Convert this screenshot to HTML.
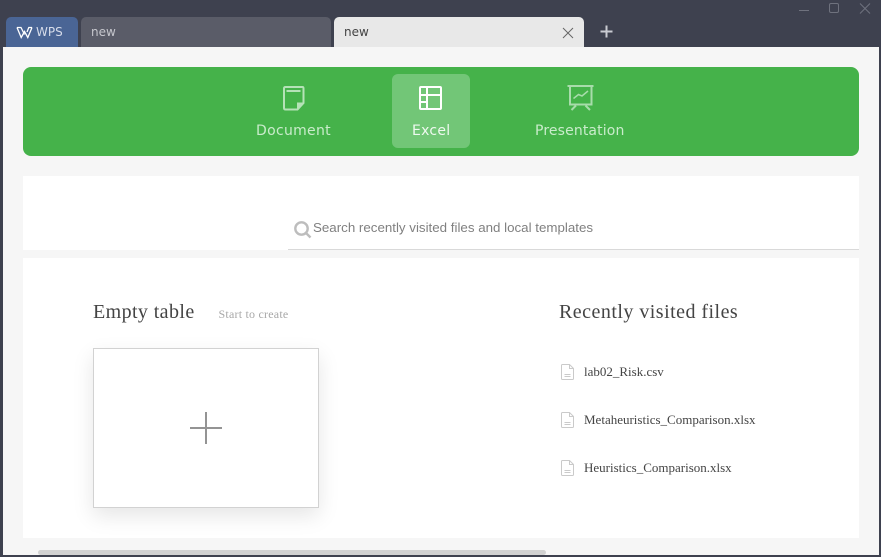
<!DOCTYPE html>
<html><head><meta charset="utf-8">
<style>
html,body{margin:0;padding:0;width:881px;height:557px;overflow:hidden;background:#3e414f}
*{box-sizing:border-box}
.a{position:absolute;white-space:nowrap}
.dj{font-family:"DejaVu Sans",sans-serif}
.ls{font-family:"Liberation Sans",sans-serif}
.lf{font-family:"Liberation Serif",serif}
svg{position:absolute;overflow:visible}
</style></head><body>
<div class="a" style="left:3px;top:47px;width:876px;height:508px;background:#f6f6f6"></div>

<div class="a" style="left:6px;top:17px;width:72px;height:30px;background:#4a6595;border-radius:5px 5px 0 0"></div>
<svg style="left:15.500px;top:26px" width="17" height="13" fill="none" stroke="#fff" stroke-width="1.300"><path d="M1 1.500L5.200 11.500L8.500 5.500L11.800 11.500L16 1.500"/><path d="M1 1.500H5L8.500 8.500"/><path d="M16 1.500H12.800L11 6"/></svg>
<div class="a dj" style="left:36px;top:25px;font-size:12px;line-height:15px;color:#d6dcea">WPS</div>
<div class="a" style="left:81px;top:17px;width:250px;height:30px;background:#5a5c68;border-radius:5px 5px 0 0"></div>
<div class="a dj" style="left:91px;top:25px;font-size:12px;line-height:15px;color:#c6c7cd">new</div>
<div class="a" style="left:334px;top:17px;width:250px;height:30px;background:#e8e8e8;border-radius:5px 5px 0 0"></div>
<div class="a dj" style="left:344px;top:25px;font-size:12px;line-height:15px;color:#444">new</div>
<svg style="left:562px;top:27px" width="12" height="12" stroke="#666" stroke-width="1" fill="none"><path d="M1 1L11 11M11 1L1 11"/></svg>
<svg style="left:600px;top:25px" width="13" height="13" stroke="#c9cbd2" stroke-width="2" fill="none"><path d="M6.500 0.500V12.500M0.500 6.500H12.500"/></svg>
<svg style="left:799px;top:3px" width="75" height="11" fill="none" stroke="#6f727e" stroke-width="1"><path d="M0 7.500H10"/><rect x="30.500" y="0.500" width="9" height="9" rx="1.500"/><path d="M61 0.500L71 10.500M71 0.500L61 10.500"/></svg>

<div class="a" style="left:23px;top:67px;width:836px;height:89px;background:#45b24a;border-radius:8px"></div>
<div class="a" style="left:392px;top:74px;width:78px;height:74px;background:#72c677;border-radius:6px"></div>
<svg style="left:282px;top:86px" width="22" height="25" fill="none" stroke="#b5e2b7" stroke-width="2"><path d="M2 2.500Q2 1 3.500 1H20.500Q21.500 1 21.500 2.500V17L15.500 23.500H3.500Q2 23.500 2 22Z"/><path d="M4.500 5H18.500"/><path d="M22 16.500H15V24Z" fill="#b5e2b7" stroke="none"/></svg>
<svg style="left:419px;top:86px" width="23" height="24" fill="none" stroke="#fff" stroke-width="2"><rect x="1" y="1" width="21" height="22" rx="1"/><path d="M1 9H22M8 1V23M1 16H8"/></svg>
<svg style="left:567px;top:85px" width="27" height="26" fill="none" stroke="#a8dcab" stroke-width="2"><path d="M0.500 1H26.500"/><path d="M3 1V19.500H24.500V1"/><path d="M6.500 13.500L11.500 9.500L15 11L21 6" stroke-width="1.500"/><path d="M9 20.500L4.500 25M18.500 20.500L23 25"/></svg>
<div class="a dj" style="left:256px;top:122px;font-size:14px;line-height:18px;letter-spacing:0.3px;color:#c9eccb">Document</div>
<div class="a dj" style="left:412px;top:122px;font-size:14px;line-height:18px;letter-spacing:0.25px;color:#eef9ef">Excel</div>
<div class="a dj" style="left:535px;top:122px;font-size:14px;line-height:18px;letter-spacing:0.13px;color:#c9eccb">Presentation</div>

<div class="a" style="left:23px;top:176px;width:836px;height:74px;background:#fff"></div>
<div class="a" style="left:288px;top:249px;width:571px;height:1px;background:#d9d9d9"></div>
<svg style="left:294px;top:221px" width="18" height="18" fill="none" stroke="#bdbdbd" stroke-width="2.400"><circle cx="7.500" cy="7.500" r="6.200"/><path d="M12 12L16.500 16.500"/></svg>
<div class="a ls" style="left:313px;top:219px;font-size:13.333px;line-height:17px;color:#808080">Search recently visited files and local templates</div>

<div class="a" style="left:23px;top:258px;width:836px;height:280px;background:#fff"></div>
<div class="a lf" style="left:93px;top:300px;font-size:20px;line-height:24px;letter-spacing:0.4px;color:#444">Empty table</div>
<div class="a lf" style="left:218.500px;top:307px;font-size:12px;line-height:15px;letter-spacing:0.22px;color:#a8a8a8">Start to create</div>
<div class="a" style="left:93px;top:348px;width:226px;height:160px;background:#fff;border:1px solid #d2d2d2;box-shadow:0 8px 20px rgba(0,0,0,.10)"></div>
<div class="a" style="left:205px;top:412px;width:2px;height:32px;background:#949494"></div>
<div class="a" style="left:190px;top:427px;width:32px;height:2px;background:#949494"></div>

<div class="a lf" style="left:559px;top:300px;font-size:20px;line-height:24px;letter-spacing:0.47px;color:#444">Recently visited files</div>
<svg style="left:561px;top:364px" width="13" height="16" fill="none" stroke="#cacaca"><path d="M0.500 1.500Q0.500 0.500 1.500 0.500H8.500L12.500 4.500V14.500Q12.500 15.500 11.500 15.500H1.500Q0.500 15.500 0.500 14.500Z"/><path d="M8.500 0.500V4.500H12.500M3.500 10.500H9.500M3.500 12.500H9.500"/></svg>
<svg style="left:561px;top:412px" width="13" height="16" fill="none" stroke="#cacaca"><path d="M0.500 1.500Q0.500 0.500 1.500 0.500H8.500L12.500 4.500V14.500Q12.500 15.500 11.500 15.500H1.500Q0.500 15.500 0.500 14.500Z"/><path d="M8.500 0.500V4.500H12.500M3.500 10.500H9.500M3.500 12.500H9.500"/></svg>
<svg style="left:561px;top:460px" width="13" height="16" fill="none" stroke="#cacaca"><path d="M0.500 1.500Q0.500 0.500 1.500 0.500H8.500L12.500 4.500V14.500Q12.500 15.500 11.500 15.500H1.500Q0.500 15.500 0.500 14.500Z"/><path d="M8.500 0.500V4.500H12.500M3.500 10.500H9.500M3.500 12.500H9.500"/></svg>
<div class="a lf" style="left:584px;top:363px;font-size:13px;line-height:17px;color:#444">lab02_Risk.csv</div>
<div class="a lf" style="left:584px;top:411px;font-size:13px;line-height:17px;color:#444">Metaheuristics_Comparison.xlsx</div>
<div class="a lf" style="left:584px;top:459px;font-size:13px;line-height:17px;color:#444">Heuristics_Comparison.xlsx</div>

<div class="a" style="left:38px;top:550px;width:508px;height:5px;background:#d2d2d2;border-radius:3px"></div>
</body></html>
